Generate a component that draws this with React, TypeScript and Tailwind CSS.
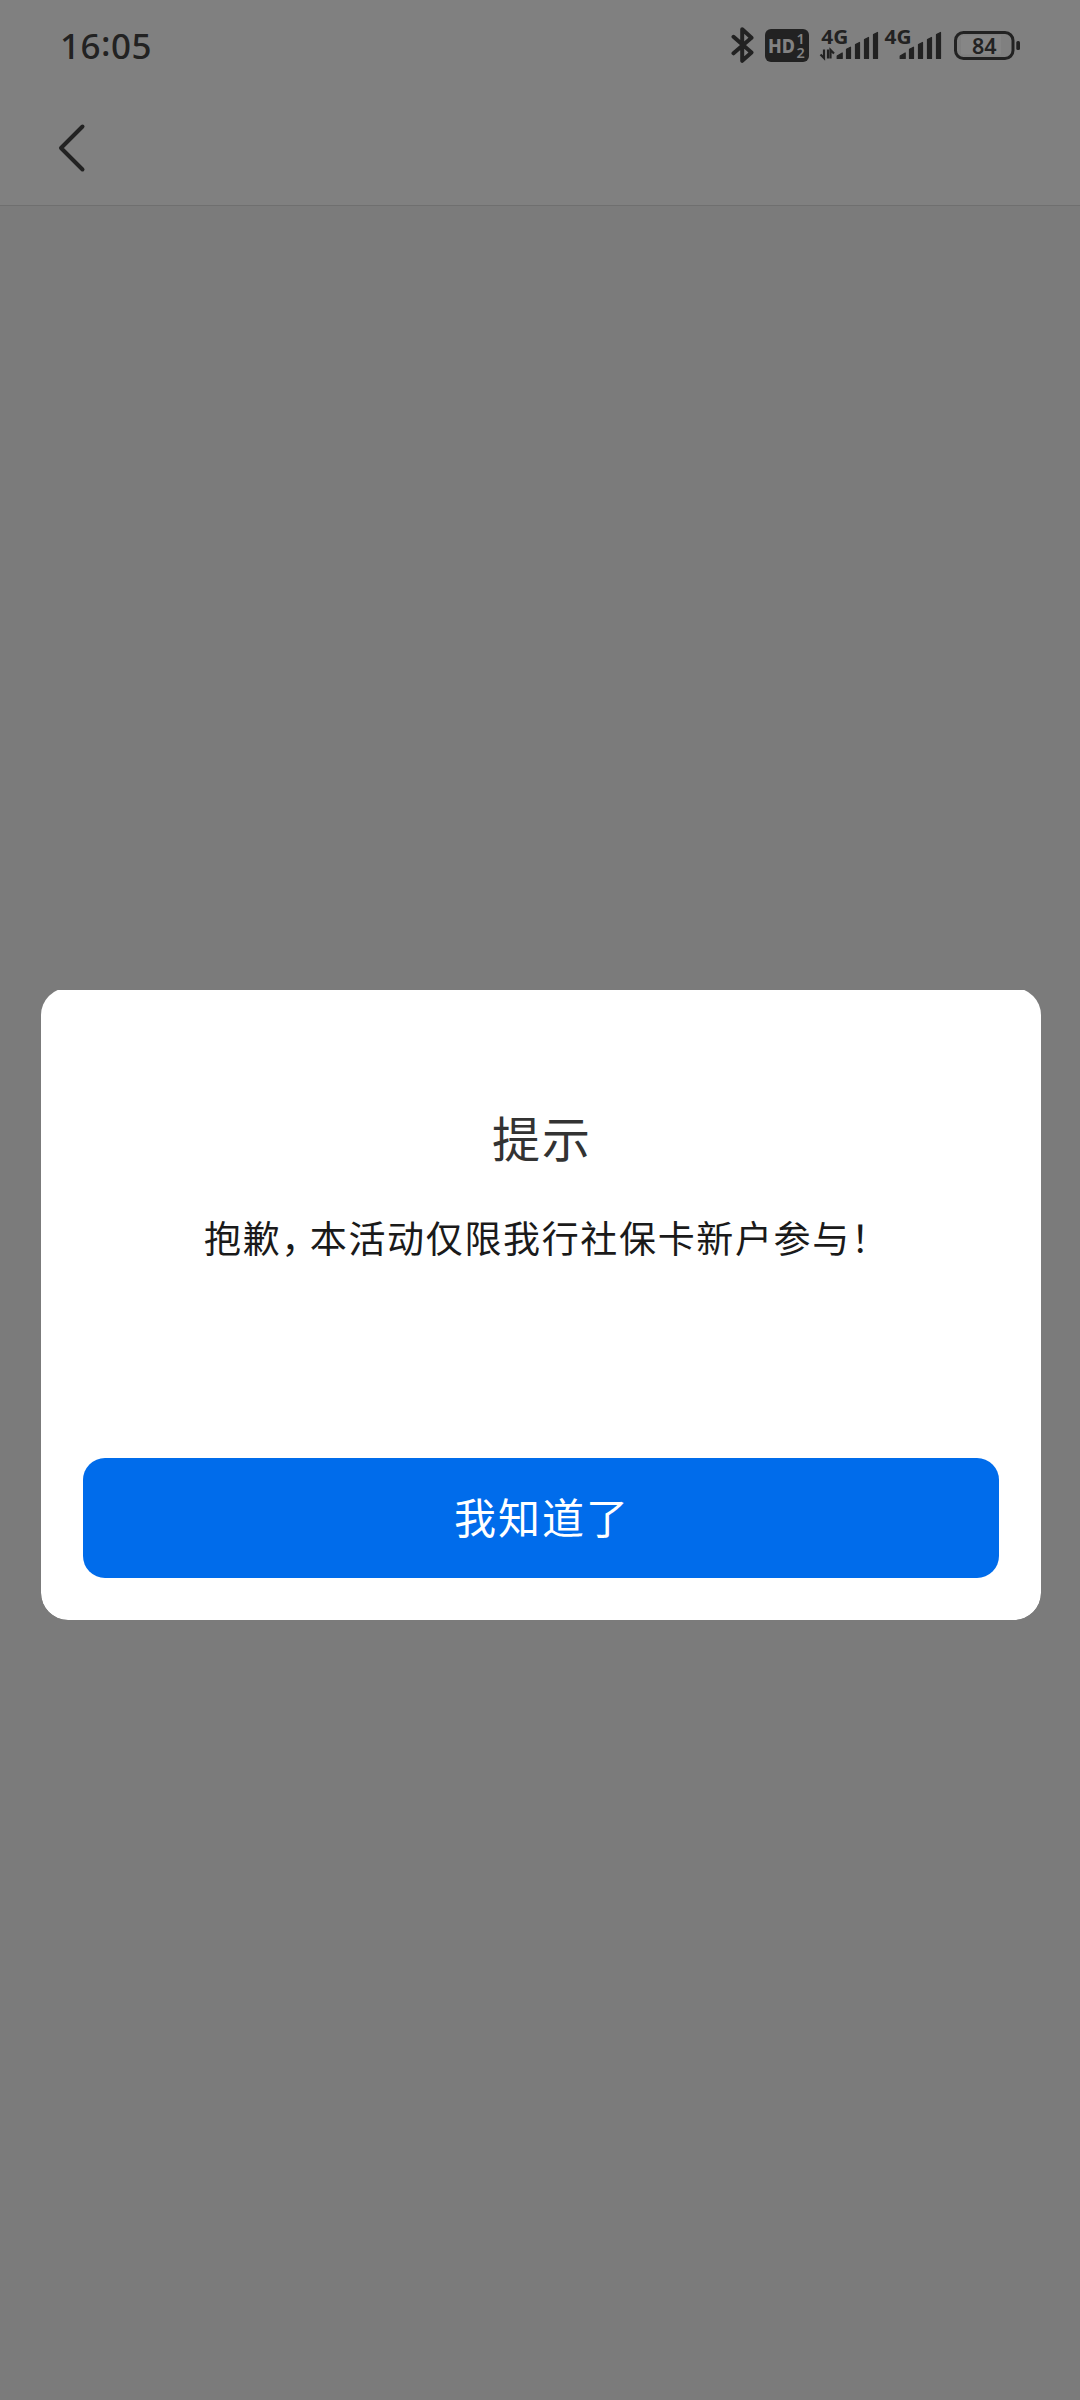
const INK = '#222222';

function BluetoothIcon() {
  return (
    <svg className="ml-auto mt-[26px] shrink-0" width="24" height="38" viewBox="0 0 24 38" fill="none" stroke={INK} strokeWidth="4" strokeLinejoin="round" strokeLinecap="round">
      <path d="M3.5 10.8 21.5 26.4 12.2 34.8V3.2L21.5 11.8 3.5 27.3" />
    </svg>
  );
}

function HdBadge() {
  return (
    <svg className="ml-[11px] mt-[29px] shrink-0 overflow-visible" width="44" height="33" viewBox="0 0 44 33" fontFamily="'Noto Sans', 'Open Sans', sans-serif">
      <rect width="44" height="33" rx="6" fill={INK} />
      <text x="3" y="23.5" fontSize="20" fontWeight="800" textLength="27" lengthAdjust="spacingAndGlyphs" fill="#828282">HD</text>
      <text x="31.5" y="14.8" fontSize="14.5" fontWeight="600" fill="#828282">1</text>
      <text x="31.5" y="28.8" fontSize="14.5" fontWeight="600" fill="#828282">2</text>
    </svg>
  );
}

function SignalBars({ x }: { x: number }) {
  return (
    <g fill={INK} stroke={INK} strokeWidth="1.2" strokeLinejoin="round">
      <path d={`M${x + 0.7} 28.5v-2.5l5-3v5.5z`} />
      <path d={`M${x + 10} 28.5v-9.3l4-2v11.3z`} />
      <path d={`M${x + 19} 28.5v-14l4-2v16z`} />
      <path d={`M${x + 28} 28.5v-19l4-2v21z`} />
      <path d={`M${x + 37} 28.5v-24l4-2v26z`} />
    </g>
  );
}

function Signals() {
  return (
    <svg className="ml-[10px] mt-[30px] shrink-0 overflow-visible" width="124" height="31" viewBox="0 0 124 31" fontFamily="'Noto Sans', 'Open Sans', sans-serif">
      <text x="2.3" y="14.2" fontSize="19" fontWeight="700" textLength="27" lengthAdjust="spacingAndGlyphs" fill={INK}>4G</text>
      <path d="M5 19.5v8.5L1.5 24.5M9 19.5v9M11.5 28.5v-8.5L15 23.5" fill="none" stroke={INK} strokeWidth="2.2" />
      <SignalBars x={17.5} />
      <text x="65.5" y="14.2" fontSize="19" fontWeight="700" textLength="27" lengthAdjust="spacingAndGlyphs" fill={INK}>4G</text>
      <SignalBars x={80.5} />
    </svg>
  );
}

function Battery() {
  return (
    <svg className="ml-[11px] mr-[59px] mt-[31px] shrink-0" width="67" height="29" viewBox="0 0 67 29" fontFamily="'Noto Sans', 'Open Sans', sans-serif">
      <rect x="1.5" y="1.5" width="57.5" height="26" rx="8" fill="none" stroke={INK} strokeWidth="3" />
      <rect x="7" y="4.5" width="40" height="19" fill="#868686" />
      <rect x="62.3" y="10" width="3.7" height="9" rx="1.5" fill={INK} />
      <text x="18" y="22.8" fontSize="21.5" fontWeight="600" fill={INK}>84</text>
    </svg>
  );
}

function TopBar() {
  return (
    <header className="h-[206px] border-b border-[#6f6f6f] bg-[#808080]">
      <div className="flex h-[90px] items-start">
        <span className="ml-[60px] mt-[22px] font-['Noto_Sans'] text-[35px] leading-[48px] font-medium tracking-[0.5px] text-[#222222]">
          16<span className="relative -top-[3px]">:</span>05
        </span>
        <BluetoothIcon />
        <HdBadge />
        <Signals />
        <Battery />
      </div>
      <button className="ml-[56px] mt-[32px] block" aria-label="返回">
        <svg width="32" height="52" viewBox="0 0 32 52" fill="none" stroke="#222222" strokeWidth="4" strokeLinecap="round" strokeLinejoin="round">
          <path d="M26.5 4.5 5 26 26.5 47.5" />
        </svg>
      </button>
    </header>
  );
}

function NoticeDialog() {
  return (
    <div className="mt-[784px] ml-[41px] h-[630px] w-[1000px] overflow-hidden rounded-b-[27px]">
      <div className="-mt-[2px] flex h-[632px] flex-col items-center rounded-[27px] bg-white">
        <h1 className="mt-[113px] -mr-[2px] text-[48px] leading-[70px] tracking-[2px] text-[#333333]">提示</h1>
        <p className="mt-[39px] ml-[2px] w-[676px] text-[37px] leading-[54px] tracking-[1.65px] whitespace-nowrap text-[#1a1a1a]">
          抱歉<span className="inline-block w-[28.5px] [font-feature-settings:'halt']">，</span>本活动仅限我行社保卡新户参与！
        </p>
        <button className="mt-[194px] h-[120px] w-[916px] rounded-[22px] bg-[#006ceb] pb-[6px] pl-[2px] text-[42px] tracking-[2px] text-white">我知道了</button>
      </div>
    </div>
  );
}

export default function App() {
  return (
    <div className="h-[2400px] w-[1080px] overflow-hidden bg-[#7b7b7b] font-['Noto_Sans_CJK_SC',sans-serif]">
      <TopBar />
      <NoticeDialog />
    </div>
  );
}
